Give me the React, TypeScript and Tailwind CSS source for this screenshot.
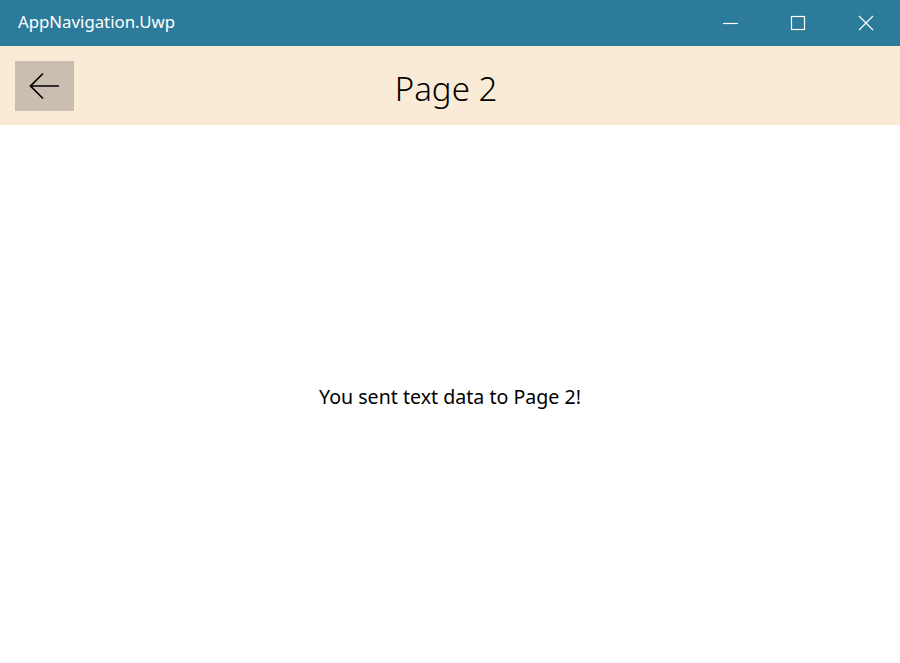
import React from "react";

export default function App() {
  const font = { fontFamily: '"Noto Sans", "Open Sans", sans-serif' };
  return (
    <div className="w-[900px] h-[663px] flex flex-col bg-white overflow-hidden" style={font}>
      <div className="h-[46px] bg-[#2d7b9b] flex items-center justify-between shrink-0">
        <div className="pl-[18px] text-white text-[16.8px] leading-none pb-[1px]">AppNavigation.Uwp</div>
        <div className="flex h-full">
          <div className="w-[68px] h-full flex items-center justify-center">
            <svg width="16" height="16" viewBox="0 0 16 16"><path d="M1 8.5H16" stroke="white" strokeWidth="1.2" /></svg>
          </div>
          <div className="w-[68px] h-full flex items-center justify-center">
            <svg width="16" height="16" viewBox="0 0 16 16"><rect x="1.5" y="1.5" width="13" height="13" fill="none" stroke="white" strokeWidth="1.2" /></svg>
          </div>
          <div className="w-[68px] h-full flex items-center justify-center">
            <svg width="16" height="16" viewBox="0 0 16 16"><path d="M1 1L15 15M15 1L1 15" stroke="white" strokeWidth="1.2" /></svg>
          </div>
        </div>
      </div>
      <div className="h-[79px] bg-[#faebd7] relative flex items-center justify-center shrink-0">
        <button className="absolute left-[15px] top-[15px] w-[59px] h-[50px] bg-[#c9beb0] flex items-center justify-center">
          <svg width="32" height="28" viewBox="0 0 32 28">
            <path d="M30 14H2M14 1.5L1.5 14L14 26.5" fill="none" stroke="black" strokeWidth="1.7" />
          </svg>
        </button>
        <div className="text-[33px] font-[350] text-black leading-none pt-[6px] mr-[8px]">Page 2</div>
      </div>
      <div className="flex-1 flex items-center justify-center">
        <div className="text-[19.6px] text-black leading-none mt-[5px]">You sent text data to Page 2!</div>
      </div>
    </div>
  );
}
